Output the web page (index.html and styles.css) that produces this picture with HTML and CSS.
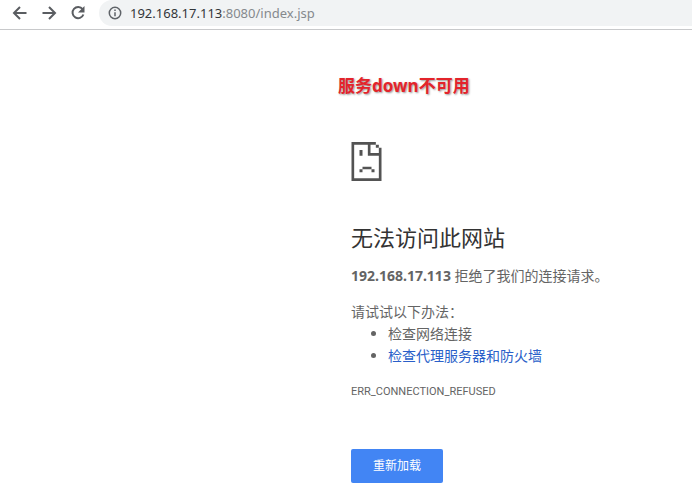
FILE: index.html
```html
<!DOCTYPE html>
<html lang="zh-CN">
<head>
<meta charset="utf-8">
<title>192.168.17.113</title>
<link rel="stylesheet" href="styles.css">
</head>
<body>
<header class="toolbar">
  <button class="nav" type="button" aria-label="后退"><svg viewBox="0 0 16 16"><path d="M14.500 8H2.500M8 2L2 8l6 6"/></svg></button>
  <button class="nav" type="button" aria-label="前进"><svg viewBox="0 0 16 16"><path d="M1.500 8h12M8 2l6 6-6 6"/></svg></button>
  <button class="nav" type="button" aria-label="刷新"><svg viewBox="0 0 16 16"><path d="M12.600 4.200A5.600 5.600 0 1 0 13.400 9.500"/><path class="solid" d="M14.500 1v6.500H8z"/></svg></button>
  <div class="address">
    <svg class="info" viewBox="0 0 14 14"><circle cx="7" cy="7" r="5.700"/><path d="M7 6.200v4M7 3.500v1.500"/></svg>
    <span class="url"><span class="host">192.168.17.113</span>:8080/index.jsp</span>
  </div>
</header>
<main class="page">
  <p class="note">服务down不可用</p>
  <svg class="sad" viewBox="0 0 90 117" aria-hidden="true">
    <path d="M0 0H73V8H57V33H82V17H90V117H0ZM8 8V109H82V41H49V8Z" fill-rule="evenodd"/>
    <path d="M73 8h9v9h-9zM24 24h9v17h-9zM33 74h27v8H33zM24 82h9v9h-9zM60 82h9v9h-9z"/>
  </svg>
  <h1>无法访问此网站</h1>
  <p class="reason"><strong>192.168.17.113</strong> 拒绝了我们的连接请求。</p>
  <p class="tips">请试试以下办法：</p>
  <ul>
    <li>检查网络连接</li>
    <li><a href="#">检查代理服务器和防火墙</a></li>
  </ul>
  <p class="code">ERR_CONNECTION_REFUSED</p>
  <button class="reload" type="button">重新加载</button>
</main>
</body>
</html>
```
FILE: styles.css
```css
* { box-sizing: border-box; }
body {
  margin: 0;
  background: #fff;
  color: #646464;
  font: 14px/22px "Noto Sans", "Noto Sans CJK SC", sans-serif;
}
p, h1, ul { margin: 0; }
.toolbar {
  display: flex;
  align-items: flex-start;
  height: 30px;
  padding-left: 12px;
  border-bottom: 1px solid #c8c9cb;
}
.nav {
  width: 16px;
  height: 26px;
  margin-right: 13px;
  padding: 0;
  border: 0;
  background: none;
}
.nav svg { display: block; width: 16px; height: 16px; }
.nav path { fill: none; stroke: #5a5d61; stroke-width: 2; }
.nav .solid { fill: #5a5d61; stroke: none; }
.address {
  display: flex;
  flex: 1;
  align-items: center;
  gap: 8px;
  height: 26px;
  padding-left: 9px;
  border-radius: 13px 0 0 13px;
  background: #f1f3f4;
}
.info { width: 14px; height: 14px; fill: none; stroke: #5f6368; stroke-width: 1.5; }
.url { color: #85898d; font-size: 13px; }
.host { color: #333639; }
.page { padding-left: 351px; }
.note {
  margin: 45px 0 0 -13px;
  color: #e3242b;
  font-size: 17px;
  font-weight: 700;
  text-shadow: 1px 1px 2px #999;
}
.sad { display: block; width: 31px; height: 39px; margin-top: 45px; fill: #535353; }
h1 {
  margin-top: 41px;
  color: #333;
  font-size: 22px;
  font-weight: 400;
  line-height: 30px;
}
.reason { margin-top: 13px; }
.tips { margin-top: 14px; }
ul { padding-left: 37px; }
a { color: #2a5fc9; text-decoration: none; }
.code { margin-top: 14px; font-family: Roboto, sans-serif; font-size: 11px; }
.reload {
  display: block;
  margin-top: 46px;
  padding: 6px 22px;
  border: 0;
  border-radius: 2px;
  background: #4285f4;
  color: #fff;
  font: 12px/22px "Noto Sans", "Noto Sans CJK SC", sans-serif;
}
```
